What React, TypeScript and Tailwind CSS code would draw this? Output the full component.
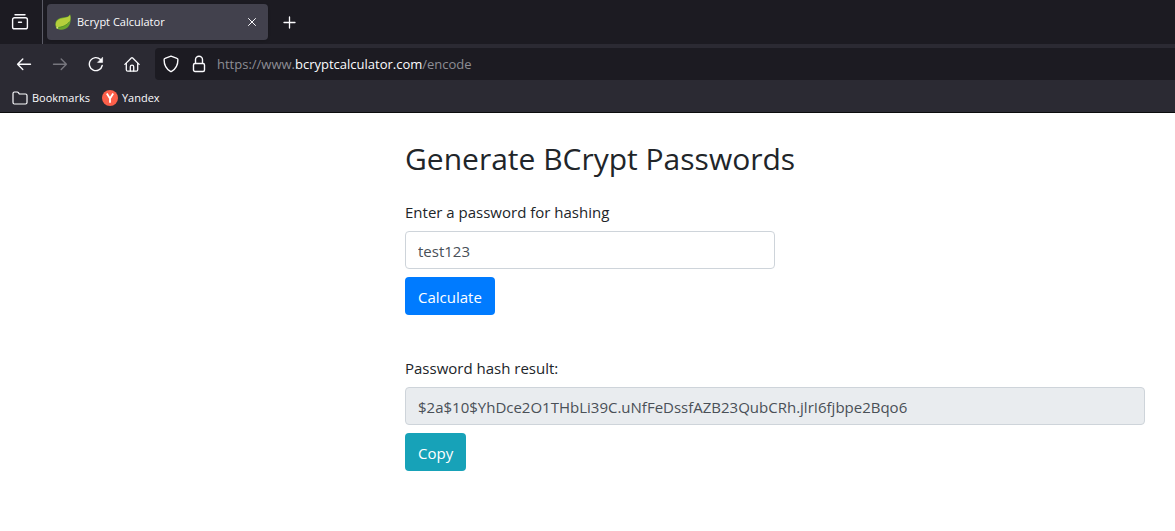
import { useState } from "react";

const RESULT = "$2a$10$YhDce2O1THbLi39C.uNfFeDssfAZB23QubCRh.jlrI6fjbpe2Bqo6";

const stroke = {
  fill: "none",
  stroke: "currentColor",
  strokeWidth: 1.4,
  strokeLinecap: "round" as const,
  strokeLinejoin: "round" as const,
  "aria-hidden": true,
};

function RecentIcon() {
  return (
    <svg width="18" height="18" viewBox="0 0 18 18" {...stroke}>
      <path d="M4 1.800h10" />
      <path d="M3.500 4.800h11a1.900 1.900 0 0 1 1.900 1.900v7.200a1.900 1.900 0 0 1-1.900 1.900h-11a1.900 1.900 0 0 1-1.900-1.900V6.700a1.900 1.900 0 0 1 1.900-1.900Z" />
      <path d="M7.500 9.200h3" />
    </svg>
  );
}

function LeafIcon() {
  return (
    <svg width="16" height="16" viewBox="0 0 16 16" aria-hidden="true">
      <path d="M15.1.3C14.3 2 13 2.7 10.700 3.100 6.500 3.800 3.500 4.100 1.500 6.600-.2 8.800-.1 12 1.600 14.200c3.300 2.200 8.200 2.100 11.200-.9C16 9.800 16.300 4.500 15.100.3Z" fill="#6aa52c" />
      <path d="M15 .8c-.9 1.900-2.300 2.500-4.500 2.900C6.600 4.400 3.600 4.600 1.800 7.100.7 8.900.4 11.400 1.600 13.200c4.800-.1 9.900-1.600 13.200-5.900C15.600 5 15.500 2.600 15 .8Z" fill="#b5cf3c" />
      <path d="M2 13.700c5-.2 9.600-2.100 12.500-6.100" fill="none" stroke="#4f8b2b" strokeWidth="0.700" />
      <circle cx="2.300" cy="13.800" r="1" fill="#d3df7d" />
    </svg>
  );
}

function CloseIcon() {
  return (
    <svg width="10" height="10" viewBox="0 0 10 10" {...stroke} strokeWidth={1}>
      <path d="m1.500 1.500 7 7M8.500 1.500l-7 7" />
    </svg>
  );
}

function PlusIcon() {
  return (
    <svg width="14" height="14" viewBox="0 0 14 14" {...stroke} strokeWidth={1.300}>
      <path d="M7.500 2v11M2 7.500h11" />
    </svg>
  );
}

function BackIcon() {
  return (
    <svg width="16" height="16" viewBox="0 0 16 16" {...stroke}>
      <path d="M14.500 8.300H1.600M6.800 3.100 1.600 8.300l5.200 5.200" />
    </svg>
  );
}

function ForwardIcon() {
  return (
    <svg width="16" height="16" viewBox="0 0 16 16" {...stroke}>
      <path d="M1.500 8.300h12.900M9.200 3.100l5.200 5.200-5.200 5.200" />
    </svg>
  );
}

function ReloadIcon() {
  return (
    <svg width="16" height="16" viewBox="0 0 16 16" {...stroke}>
      <path d="M14.200 9.500A6.500 6.500 0 1 1 12.500 3.600" />
      <path d="M14.600 1.600v4.800H9.800Z" fill="currentColor" strokeWidth="0.6" />
    </svg>
  );
}

function HomeIcon() {
  return (
    <svg width="16" height="16" viewBox="0 0 16 16" {...stroke} strokeWidth={1.300}>
      <path d="M.9 8.400 7.300 2a1 1 0 0 1 1.400 0l6.400 6.400" />
      <path d="M2.300 7.500v6.200c0 .9.600 1.500 1.500 1.500h8.400c.9 0 1.500-.6 1.500-1.500V7.500" />
      <path d="M6.300 15v-4.200a1.700 1.700 0 0 1 3.400 0V15" />
    </svg>
  );
}

function ShieldIcon() {
  return (
    <svg width="16" height="18" viewBox="0 0 16 18" {...stroke}>
      <path d="M8 1.200 14 3.400c.6.200.9.700.9 1.300 0 5.200-2.300 9.300-6.300 11.600a1.300 1.300 0 0 1-1.200 0C3.400 14 1.100 9.900 1.100 4.700c0-.6.300-1.100.9-1.300Z" />
    </svg>
  );
}

function LockIcon() {
  return (
    <svg width="14" height="18" viewBox="0 0 14 18" {...stroke}>
      <path d="M3.500 8.300V4.800a3.500 3.500 0 0 1 7 0v3.500" />
      <rect x="1.500" y="8.500" width="11" height="8" rx="1.500" />
    </svg>
  );
}

function FolderIcon() {
  return (
    <svg width="16" height="14" viewBox="0 0 16 14" {...stroke} strokeWidth={1.200}>
      <path d="M1 11.500v-9A1.500 1.500 0 0 1 2.500 1h2.700c.5 0 .9.200 1.200.6l.9 1.400h6.200A1.500 1.500 0 0 1 15 4.500v7a1.500 1.500 0 0 1-1.500 1.500h-11A1.500 1.500 0 0 1 1 11.500Z" />
    </svg>
  );
}

function TabStrip() {
  return (
    <div className="flex h-11 items-center bg-[#1c1b22]">
      <div className="flex h-full w-[43px] shrink-0 items-center justify-center border-r border-[#5b5b66] pr-0.5">
        <button type="button" aria-label="Recent browsing">
          <RecentIcon />
        </button>
      </div>
      <div className="ml-1 flex h-9 w-[221px] items-center rounded bg-[#42414d] pr-[11px] pl-2 shadow">
        <LeafIcon />
        <span className="ml-1.5 flex-1 text-[11px]">Bcrypt Calculator</span>
        <button type="button" aria-label="Close tab">
          <CloseIcon />
        </button>
      </div>
      <button type="button" aria-label="New tab" className="ml-[14px]">
        <PlusIcon />
      </button>
    </div>
  );
}

function Toolbar() {
  return (
    <div className="flex h-10 items-center bg-[#2b2a33] pl-4">
      <div className="flex shrink-0 items-center gap-5">
        <button type="button" aria-label="Back"><BackIcon /></button>
        <button type="button" aria-label="Forward" className="text-[#77767e]"><ForwardIcon /></button>
        <button type="button" aria-label="Reload"><ReloadIcon /></button>
        <button type="button" aria-label="Home"><HomeIcon /></button>
      </div>
      <div className="ml-[15px] flex h-8 flex-1 items-center rounded-l bg-[#1c1b22] pl-2">
        <button type="button" aria-label="Tracking protection"><ShieldIcon /></button>
        <button type="button" aria-label="Site security" className="ml-[13px]"><LockIcon /></button>
        <div
          role="textbox"
          aria-label="Address"
          contentEditable
          suppressContentEditableWarning
          spellCheck={false}
          className="ml-[11px] flex-1 pt-0.5 text-[13px] text-[#8d8d94] outline-none"
        >
          https://www.<span className="text-[#fbfbfe]">bcryptcalculator.com</span>/encode
        </div>
      </div>
    </div>
  );
}

function BookmarksBar() {
  return (
    <nav aria-label="Bookmarks" className="flex h-[29px] items-center gap-3 border-b border-[#0c0c0d] bg-[#2b2a33] pl-3 text-[11px]">
      <button type="button" className="flex items-center gap-1">
        <FolderIcon />
        Bookmarks
      </button>
      <a href="#yandex" className="flex items-center gap-1">
        <svg width="16" height="16" viewBox="0 0 16 16" aria-hidden="true">
          <circle cx="8" cy="8" r="8" fill="#fc5f4a" />
          <path d="M4.800 3.600 8 8.500l3.200-4.900M8 8.500v4.300" fill="none" stroke="#fff" strokeWidth="1.800" />
        </svg>
        Yandex
      </a>
    </nav>
  );
}

export default function App() {
  const [password, setPassword] = useState("test123");

  return (
    <div className="min-h-screen bg-white font-['Open_Sans','Noto_Sans',sans-serif]">
      <header className="text-[#fbfbfe]">
        <TabStrip />
        <Toolbar />
        <BookmarksBar />
      </header>
      <main className="pt-[27px] pr-[30px] pl-[405px] text-[15px] leading-6 text-[#212529]">
        <h1 className="mb-[22px] text-[30px] leading-[38px]">Generate BCrypt Passwords</h1>
        <form onSubmit={(event) => event.preventDefault()}>
          <label htmlFor="password" className="mb-[7px] block">Enter a password for hashing</label>
          <input
            id="password"
            type="text"
            value={password}
            onChange={(event) => setPassword(event.target.value)}
            className="block h-[38px] w-1/2 rounded border border-[#ced4da] bg-white px-3 pt-0.5 text-[#495057]"
          />
          <button type="submit" className="mt-2 block h-[38px] rounded bg-[#007bff] px-[13px] pt-0.5 text-white">
            Calculate
          </button>
        </form>
        <section className="mt-[41px]">
          <label htmlFor="result" className="mb-[7px] block">Password hash result:</label>
          <input
            id="result"
            type="text"
            readOnly
            value={RESULT}
            className="block h-[38px] w-full rounded border border-[#ced4da] bg-[#e9ecef] px-3 pt-0.5 text-[#495057]"
          />
          <button
            type="button"
            onClick={() => navigator.clipboard?.writeText(RESULT)}
            className="mt-2 block h-[38px] rounded bg-[#17a2b8] px-[13px] pt-0.5 text-white"
          >
            Copy
          </button>
        </section>
      </main>
    </div>
  );
}
